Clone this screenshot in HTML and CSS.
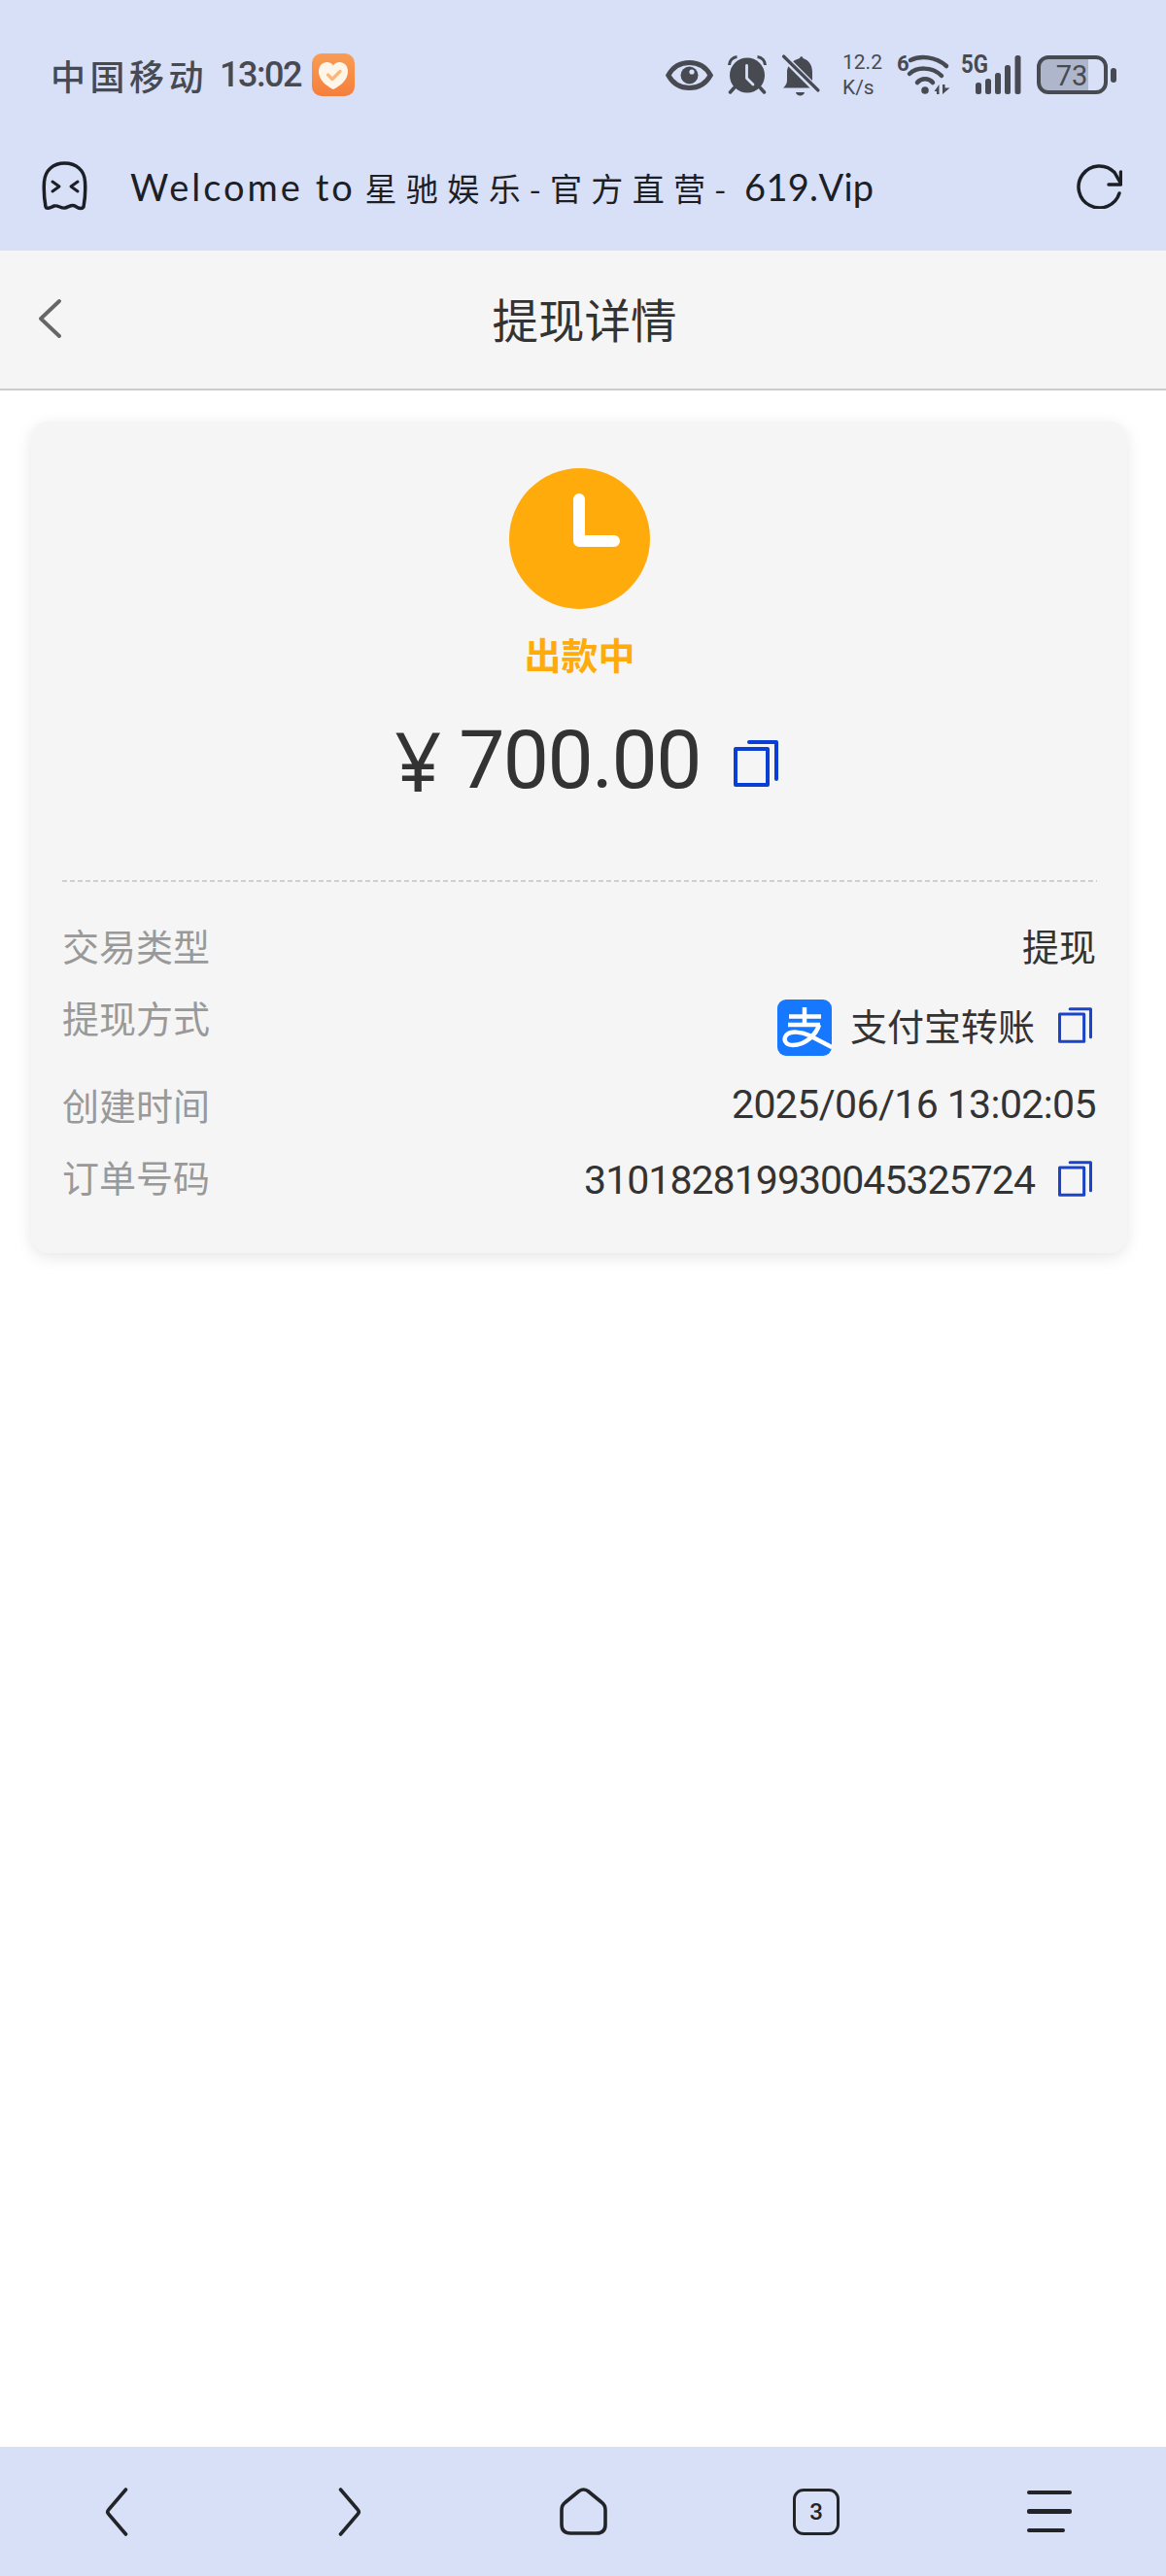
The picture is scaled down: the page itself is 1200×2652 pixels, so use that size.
FILE: index.html
```html
<!DOCTYPE html>
<html lang="zh-CN">
<head>
<meta charset="utf-8">
<title>提现详情</title>
<link rel="stylesheet" href="styles.css">
</head>
<body>
<div class="page">
  <header class="chrome">
    <div class="status">
      <div class="status-left">
        <span class="carrier">中国移动</span>
        <span class="clock">13:02</span>
        <svg class="app-badge" viewBox="0 0 44 44">
          <defs><linearGradient id="badge" x1="0" y1="0" x2="0" y2="1"><stop offset="0" stop-color="#f99c55"/><stop offset="1" stop-color="#f57f3c"/></linearGradient></defs>
          <rect width="44" height="44" rx="10" fill="url(#badge)"/>
          <path d="M22 37C14 33 7 27 7 18.500C7 12.500 11 9 15.500 9C18.500 9 20.800 10.300 22 12.500C23.200 10.300 25.500 9 28.500 9C33 9 37 12.500 37 18.500C37 27 30 33 22 37Z" fill="#fff6ea"/>
          <path d="M16.500 22L21 26.500L29 18.500" fill="none" stroke="#fbb679" stroke-width="3.200" stroke-linecap="round" stroke-linejoin="round"/>
        </svg>
      </div>
      <div class="status-right">
        <svg class="ic-eye" viewBox="0 0 49 31">
          <path d="M2.800 15.500C8 6 16 2.500 24.500 2.500C33 2.500 41 6 46.200 15.500C41 25 33 28.500 24.500 28.500C16 28.500 8 25 2.800 15.500Z" fill="none" stroke="#484a52" stroke-width="5"/>
          <circle cx="24.500" cy="15.500" r="9" fill="#484a52"/>
          <circle cx="27" cy="12" r="2.600" fill="#d8e0f8"/>
        </svg>
        <svg class="ic-alarm" viewBox="0 0 40 40">
          <circle cx="20" cy="20.500" r="18" fill="#484a52"/>
          <path d="M1.500 10C1.500 5.500 5 1.800 9.500 1.500M38.500 10C38.500 5.500 35 1.800 30.500 1.500" fill="none" stroke="#484a52" stroke-width="3"/>
          <path d="M6.500 33.500L2.500 38M33.500 33.500L37.500 38" stroke="#484a52" stroke-width="3.500" stroke-linecap="round"/>
          <path d="M19.500 10.500V23.500L26 30" fill="none" stroke="#d8e0f8" stroke-width="2.800" stroke-linecap="round" stroke-linejoin="round"/>
        </svg>
        <svg class="ic-bell" viewBox="0 0 38 43">
          <path d="M18 4C18.500 1.500 21 1.500 21.500 4C27.500 6 31 11 31 18V30L34 34.500H1C3 32.500 5 30.500 5 27V18C5 11 11 6 18 4Z" fill="#484a52"/>
          <path d="M14 39H23C22.500 43.500 14.500 43.500 14 39Z" fill="#484a52"/>
          <path d="M-1 0L37 38" stroke="#d8e0f8" stroke-width="7"/>
          <path d="M1.500 2L37 37" stroke="#484a52" stroke-width="3.200" stroke-linecap="round"/>
        </svg>
        <div class="speed"><span>12.2</span><span>K/s</span></div>
        <svg class="ic-wifi" viewBox="0 0 55 40">
          <text class="ic-text" x="0" y="16" font-size="22">6</text>
          <g fill="none" stroke="#484a52" stroke-linecap="round">
            <path d="M14 5C24 0 40 1 51 11" stroke-width="4.500"/>
            <path d="M13 19C20 12 36 11 46 21" stroke-width="4.500"/>
            <path d="M21 28C25 23 33 23 37 28" stroke-width="4.500"/>
          </g>
          <circle cx="29" cy="36" r="3.800" fill="#484a52"/>
          <path d="M38.500 37L43.500 30V40H41V37ZM47 30H49.500V33.500H54.500L47 40Z" fill="#484a52"/>
        </svg>
        <svg class="ic-signal" viewBox="0 0 62 40">
          <text class="ic-text" x="0" y="18" font-size="25" textLength="28" lengthAdjust="spacingAndGlyphs">5G</text>
          <g fill="#484a52">
            <rect x="15" y="28" width="6" height="12" rx="2.500"/>
            <rect x="25" y="24" width="6" height="16" rx="2.500"/>
            <rect x="35" y="18" width="6" height="22" rx="2.500"/>
            <rect x="45" y="10" width="6" height="30" rx="2.500"/>
            <rect x="55.500" y="0" width="6" height="40" rx="2.500"/>
          </g>
        </svg>
        <svg class="ic-battery" viewBox="0 0 82 40">
          <path d="M10 4H53V36H10C6 36 4 34 4 30V10C4 6 6 4 10 4Z" fill="#aeb6cc"/>
          <rect x="2" y="2" width="69" height="36" rx="10" fill="none" stroke="#484a52" stroke-width="4"/>
          <rect x="76" y="13" width="6" height="15" rx="3" fill="#484a52"/>
          <text class="ic-battery-text" x="36" y="31" font-size="29" text-anchor="middle">73</text>
        </svg>
      </div>
    </div>
    <div class="urlbar">
      <svg class="ic-ghost" viewBox="0 0 47 51">
        <path d="M4 47C2 36 2 28 2.500 21C3.500 9 12 2 23.500 2C35 2 44 9 44.500 21C45 28 45 36 43 47C41 50 37 48 34 46C31 44 28 47 24 48C20 49 17 45 13 46C10 47 5 50 4 47Z" fill="none" stroke="#1c2026" stroke-width="3.500" stroke-linejoin="round"/>
        <path d="M11 21L18 26L11 31M37 21L30 26L37 31" fill="none" stroke="#1c2026" stroke-width="3" stroke-linecap="round" stroke-linejoin="round"/>
      </svg>
      <p class="url-title"><span class="url-latin">Welcome to</span> <span class="url-cjk">星驰娱乐-官方直营-</span> <span class="url-domain">619.Vip</span></p>
      <svg class="ic-refresh" viewBox="0 0 47 46">
        <path d="M44 30A21.500 21.500 0 1 1 39 8.500L45 19" fill="none" stroke="#1c2026" stroke-width="3.500" stroke-linecap="round"/>
        <path d="M45.500 8V21H33" fill="none" stroke="#1c2026" stroke-width="3.500" stroke-linecap="round" stroke-linejoin="round"/>
      </svg>
    </div>
  </header>

  <nav class="nav">
    <svg class="nav-back" viewBox="0 0 24 40"><path d="M22 2L3 20L22 38" fill="none" stroke="#666" stroke-width="3.800" stroke-linecap="round" stroke-linejoin="round"/></svg>
    <h1 class="nav-title">提现详情</h1>
  </nav>

  <main class="content">
    <section class="card">
      <svg class="state-icon" viewBox="0 0 145 145">
        <circle cx="72.500" cy="72.500" r="72.500" fill="#ffab0b"/>
        <path d="M72 32V75H108" fill="none" stroke="#fff" stroke-width="12" stroke-linecap="round" stroke-linejoin="round"/>
      </svg>
      <div class="state-label">出款中</div>
      <div class="amount">
        <span class="amount-yen">¥</span>
        <span class="amount-value">700.00</span>
        <svg class="copy copy-large" viewBox="0 0 46 48"><path d="M2 9H35V46H2ZM16 2H44V40" fill="none" stroke="#0a3fd6" stroke-width="4" stroke-linejoin="round" stroke-linecap="round"/></svg>
      </div>
      <div class="divider"></div>
      <div class="rows">
        <div class="row">
          <span class="row-label">交易类型</span>
          <span class="row-value">提现</span>
        </div>
        <div class="row row-method">
          <span class="row-label">提现方式</span>
          <span class="row-value with-logo">
            <svg class="alipay" viewBox="0 0 56 58">
              <defs><clipPath id="ali"><rect width="56" height="58" rx="9"/></clipPath></defs>
              <rect width="56" height="58" rx="9" fill="#1677ff"/>
              <g clip-path="url(#ali)" fill="none" stroke="#fff" stroke-width="4.500">
                <path d="M12 17.500H45M28 8V26M11 26H44"/>
                <path d="M43 26C40 36 29 47 16 47C8 47 6 41 9 37C13 32 25 33 33 37L58 50"/>
              </g>
            </svg>
            <span class="method-name">支付宝转账</span>
            <svg class="copy copy-small" viewBox="0 0 46 48"><path d="M2 9H35V46H2ZM16 2H44V40" fill="none" stroke="#1a45c8" stroke-width="4" stroke-linejoin="round" stroke-linecap="round"/></svg>
          </span>
        </div>
        <div class="row">
          <span class="row-label">创建时间</span>
          <span class="row-value num num-date">2025/06/16 13:02:05</span>
        </div>
        <div class="row">
          <span class="row-label">订单号码</span>
          <span class="row-value with-logo">
            <span class="num num-order">310182819930045325724</span>
            <svg class="copy copy-small" viewBox="0 0 46 48"><path d="M2 9H35V46H2ZM16 2H44V40" fill="none" stroke="#1a45c8" stroke-width="4" stroke-linejoin="round" stroke-linecap="round"/></svg>
          </span>
        </div>
      </div>
    </section>
  </main>

  <footer class="toolbar">
    <svg class="tool tool-nav" viewBox="0 0 24 50"><path d="M21.500 2L4 22.500Q1.500 25 4 27.500L21.500 48" fill="none" stroke="#222428" stroke-width="3.600" stroke-linecap="round"/></svg>
    <svg class="tool tool-nav" viewBox="0 0 24 50"><path d="M2.500 2L20 22.500Q22.500 25 20 27.500L2.500 48" fill="none" stroke="#222428" stroke-width="3.600" stroke-linecap="round"/></svg>
    <svg class="tool tool-home" viewBox="0 0 49 49"><path d="M6 15L20 3.500Q24.500 0.500 29 3.500L43 15Q47 18 47 23V38Q47 47 38 47H11Q2 47 2 38V23Q2 18 6 15Z" fill="none" stroke="#222428" stroke-width="3.600" stroke-linejoin="round"/></svg>
    <div class="tool-tabs">3</div>
    <div class="tool-menu"><i></i><i></i><i class="short"></i></div>
  </footer>
</div>
</body>
</html>
```
FILE: styles.css
```css
* { box-sizing: border-box; }

html, body { margin: 0; padding: 0; background: #fff; }

body {
  font-family: "Noto Sans CJK SC", "Noto Sans", sans-serif;
  color: #333;
}

.page {
  width: 1200px;
  height: 2652px;
  display: flex;
  flex-direction: column;
  overflow: hidden;
}

/* System status area and browser address bar */
.chrome {
  height: 258px;
  background: #d8e0f8;
  display: flex;
  flex-direction: column;
}

.status {
  height: 44px;
  margin-top: 55px;
  padding: 0 51px 0 52px;
  display: flex;
  justify-content: space-between;
  align-items: center;
  color: #484a52;
}

.status-left { display: flex; align-items: center; }

.carrier {
  font-size: 36px;
  font-weight: 500;
  line-height: 42px;
  letter-spacing: 4.500px;
  width: 174px;
}

.clock {
  font-family: Roboto, sans-serif;
  font-weight: 500;
  font-size: 36px;
  line-height: 44px;
  letter-spacing: -1.500px;
  width: 95px;
}

.app-badge { width: 44px; height: 44px; display: block; }

.status-right { display: flex; align-items: center; }

.status-right svg { display: block; flex: none; overflow: visible; }

.ic-eye { width: 49px; height: 31px; }
.ic-alarm { width: 40px; height: 40px; margin-left: 15px; }
.ic-bell { width: 38px; height: 43px; margin-left: 16px; }
.ic-wifi { width: 55px; height: 40px; margin-left: 19px; }
.ic-signal { width: 62px; height: 40px; margin-left: 11px; }
.ic-battery { width: 82px; height: 40px; margin-left: 16px; }

.ic-text {
  font-family: Roboto, sans-serif;
  font-weight: 700;
  fill: #484a52;
}

.ic-battery-text {
  font-family: Roboto, sans-serif;
  fill: #484a52;
}

.speed {
  width: 37px;
  margin-left: 24px;
  display: flex;
  flex-direction: column;
  font-family: Roboto, sans-serif;
  font-size: 21px;
  line-height: 26px;
  white-space: nowrap;
}

.urlbar {
  margin-top: 67px;
  height: 51px;
  padding: 0 45px 0 43px;
  display: flex;
  align-items: center;
  color: #1c2026;
}

.ic-ghost { width: 47px; height: 51px; flex: none; }

.url-title {
  margin: 2px 0 0 44px;
  flex: 1;
  font-family: Lato, "Noto Sans CJK SC", sans-serif;
  font-size: 38px;
  line-height: 51px;
  white-space: nowrap;
}

.url-latin { letter-spacing: 3px; }

.url-cjk {
  font-family: "Noto Sans CJK SC", sans-serif;
  font-size: 33px;
  letter-spacing: 9.400px;
}

.url-domain { letter-spacing: 0.300px; }

.ic-refresh { width: 47px; height: 46px; flex: none; }

/* Page title bar */
.nav {
  height: 144px;
  background: #f5f5f5;
  border-bottom: 2px solid #ccc;
  display: flex;
  align-items: center;
  justify-content: center;
  position: relative;
  padding: 0 0 2px 3px;
}

.nav-back {
  position: absolute;
  left: 39px;
  top: 50px;
  width: 24px;
  height: 40px;
}

.nav-title {
  margin: 0;
  font-size: 47.500px;
  font-weight: 400;
  line-height: 60px;
  color: #333;
}

/* Withdrawal detail card */
.content { flex: 1; padding: 32px 40px 32px 32px; }

.card {
  background: #f5f5f5;
  border-radius: 18px;
  box-shadow: 0 4px 16px rgba(0, 0, 0, 0.1);
  padding: 48px 31px 51px 32px;
  display: flex;
  flex-direction: column;
  align-items: stretch;
}

.state-icon { width: 145px; height: 145px; align-self: center; display: block; }

.state-label {
  margin-top: 28px;
  text-align: center;
  font-size: 38px;
  font-weight: 700;
  line-height: 36px;
  color: #ffab0b;
}

.amount {
  margin-top: 51px;
  height: 82px;
  padding-left: 14px;
  display: flex;
  align-items: center;
  justify-content: center;
  color: #333;
  font-family: Roboto, sans-serif;
  font-size: 84px;
  line-height: 82px;
}

.amount-yen { font-family: "Noto Sans", sans-serif; }

.amount-value { margin-left: 18px; letter-spacing: -1.600px; }

.copy { display: block; flex: none; }

.copy-large { width: 46px; height: 48px; margin-left: 34px; margin-top: 6px; }

.copy-small { width: 35px; height: 37px; margin-left: 24px; margin-right: 5px; }

.divider {
  margin-top: 82px;
  height: 2px;
  background: repeating-linear-gradient(90deg, #d0d0d0 0 5px, transparent 5px 8px);
}

.rows {
  margin-top: 41px;
  display: flex;
  flex-direction: column;
  gap: 26px;
}

.row {
  display: flex;
  justify-content: space-between;
  align-items: flex-start;
  font-size: 38px;
  line-height: 48px;
}

.row-label { color: #999; }

.row-value { color: #333; padding-right: 1px; }

.with-logo { display: flex; align-items: center; padding-right: 0; }

.row-method .with-logo { height: 64px; }

.alipay { width: 56px; height: 58px; align-self: flex-end; margin-right: 19px; display: block; }

.num {
  font-family: Roboto, sans-serif;
  font-size: 41px;
}

.num-date { letter-spacing: -0.600px; }

.num-order { letter-spacing: -0.950px; padding-top: 4px; }

/* Bottom browser toolbar */
.toolbar {
  height: 133px;
  background: #d8e0f8;
  display: grid;
  grid-template-columns: repeat(5, 240px);
  align-items: center;
  justify-items: center;
}

.tool { display: block; }

.tool-nav { width: 24px; height: 50px; }

.tool-home { width: 49px; height: 49px; }

.tool-tabs {
  width: 48px;
  height: 48px;
  border: 3.600px solid #222428;
  border-radius: 11px;
  display: flex;
  align-items: center;
  justify-content: center;
  font-family: Roboto, sans-serif;
  font-size: 24px;
  font-weight: 500;
  color: #222428;
}

.tool-menu {
  width: 46px;
  display: flex;
  flex-direction: column;
  gap: 15px;
}

.tool-menu i {
  display: block;
  height: 4.500px;
  border-radius: 2px;
  background: #222428;
}

.tool-menu .short { width: 39px; }
```
